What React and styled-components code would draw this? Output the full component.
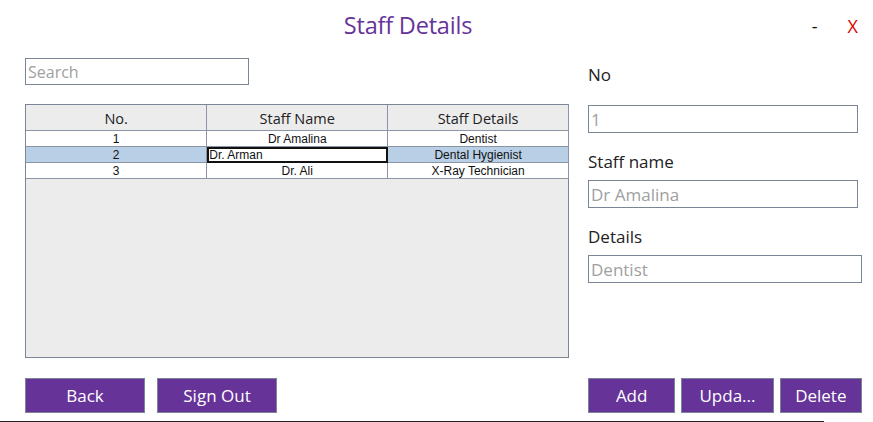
import React from 'react'
import styled, { createGlobalStyle } from 'styled-components'

const GlobalStyle = createGlobalStyle`
  html, body {
    margin: 0;
    padding: 0;
    background: #fff;
  }
  body {
    font-family: 'Open Sans', 'Noto Sans', sans-serif;
  }
`

const Window = styled.div`
  width: 873px;
  height: 422px;
  box-sizing: border-box;
  background: #fff;
  display: flex;
  flex-direction: column;
  overflow: hidden;
`

const BottomEdge = styled.div`
  height: 1px;
  width: 824px;
  background: #222;
`

const TitleBar = styled.header`
  height: 52px;
  display: grid;
  grid-template-columns: 1fr auto 1fr;
  align-items: center;
  padding: 0 15px 0 0;
`

const Title = styled.h1`
  grid-column: 2;
  margin: 0 0 2px -42px;
  font-size: 23.5px;
  font-weight: 400;
  color: #663399;
  letter-spacing: -0.2px;
`

const Controls = styled.div`
  grid-column: 3;
  justify-self: end;
  display: flex;
  gap: 30px;
  align-items: center;
  font-size: 18px;
`

const Control = styled.span`
  color: ${(p) => p.color};
`

const Body = styled.main`
  flex: 1;
  display: grid;
  grid-template-columns: 544px 274px;
  column-gap: 19px;
  padding: 6px 0 0 25px;
`

const LeftColumn = styled.section`
  display: flex;
  flex-direction: column;
`

const RightColumn = styled.section`
  display: flex;
  flex-direction: column;
`

const TextBox = styled.input`
  box-sizing: border-box;
  width: ${(p) => p.width}px;
  height: ${(p) => p.h || 28}px;
  border: 1px solid #7a8696;
  padding: ${(p) => (p.fs ? '1px 2px 0' : '0 2px')};
  font-family: 'Open Sans', 'Noto Sans', sans-serif;
  font-size: ${(p) => p.fs || 17}px;
  outline: none;
  &::placeholder {
    color: #a0a0a0;
  }
`

const TableFrame = styled.div`
  margin-top: 19px;
  height: 254px;
  box-sizing: border-box;
  border: 1px solid #7a8696;
  background: #ececec;
`

const Grid = styled.table`
  width: 543px;
  border-collapse: collapse;
  table-layout: fixed;
  font-family: 'Liberation Sans', Arial, sans-serif;
`

const HeadCell = styled.th`
  height: 24px;
  padding: 1px 0 0;
  font-family: 'Open Sans', 'Noto Sans', sans-serif;
  font-weight: 400;
  font-size: 14.5px;
  color: #222;
  background: #ececec;
  border-right: 1px solid #8a96a6;
  border-bottom: 1px solid #8a96a6;
`

const Row = styled.tr`
  background: ${(p) => (p.selected ? '#b8cfe6' : '#fff')};
`

const Cell = styled.td`
  height: 14px;
  padding: 1px 0 0;
  font-size: 12px;
  line-height: 14px;
  color: #111;
  text-align: ${(p) => (p.editing ? 'left' : 'center')};
  border-right: 1px solid #8a96a6;
  border-bottom: 1px solid #8a96a6;
  ${(p) =>
    p.editing &&
    `
    background: #fff;
    outline: 2px solid #111;
    outline-offset: -2px;
    padding-left: 2px;
  `}
`

const Label = styled.label`
  box-sizing: border-box;
  font-size: 17px;
  color: #222;
  height: ${(p) => p.h}px;
  padding-bottom: ${(p) => p.pb || 0}px;
  display: flex;
  align-items: flex-end;
`

const ButtonRow = styled.div`
  display: flex;
  gap: ${(p) => p.gap}px;
  margin-top: ${(p) => p.mt}px;
`

const Button = styled.button`
  box-sizing: border-box;
  width: ${(p) => p.width}px;
  height: 35px;
  background: #663399;
  color: #fff;
  border: 1px solid #7a8696;
  font-family: 'Open Sans', 'Noto Sans', sans-serif;
  font-size: 17px;
  padding: 0;
  cursor: pointer;
`

const staff = [
  { no: 1, name: 'Dr Amalina', details: 'Dentist' },
  { no: 2, name: 'Dr. Arman', details: 'Dental Hygienist' },
  { no: 3, name: 'Dr. Ali', details: 'X-Ray Technician' },
]

export default function App() {
  return (
    <>
      <GlobalStyle />
      <Window>
        <TitleBar>
          <Title>Staff Details</Title>
          <Controls>
            <Control color="#111">-</Control>
            <Control color="#e00000">X</Control>
          </Controls>
        </TitleBar>
        <Body>
          <LeftColumn>
            <TextBox width={224} h={27} fs={16} placeholder="Search" />
            <TableFrame>
              <Grid>
                <thead>
                  <tr>
                    <HeadCell>No.</HeadCell>
                    <HeadCell>Staff Name</HeadCell>
                    <HeadCell>Staff Details</HeadCell>
                  </tr>
                </thead>
                <tbody>
                  {staff.map((s) => (
                    <Row key={s.no} selected={s.no === 2}>
                      <Cell>{s.no}</Cell>
                      <Cell editing={s.no === 2}>{s.name}</Cell>
                      <Cell>{s.details}</Cell>
                    </Row>
                  ))}
                </tbody>
              </Grid>
            </TableFrame>
            <ButtonRow gap={12} mt={20}>
              <Button width={120}>Back</Button>
              <Button width={120}>Sign Out</Button>
            </ButtonRow>
          </LeftColumn>
          <RightColumn>
            <Label h={47} pb={19}>No</Label>
            <TextBox width={270} placeholder="1" />
            <Label h={47} pb={7}>Staff name</Label>
            <TextBox width={270} placeholder="Dr Amalina" />
            <Label h={47} pb={7}>Details</Label>
            <TextBox width={274} placeholder="Dentist" />
            <ButtonRow gap={6} mt={95}>
              <Button width={88}>Add</Button>
              <Button width={93}>Upda...</Button>
              <Button width={83}>Delete</Button>
            </ButtonRow>
          </RightColumn>
        </Body>
        <BottomEdge />
      </Window>
    </>
  )
}
